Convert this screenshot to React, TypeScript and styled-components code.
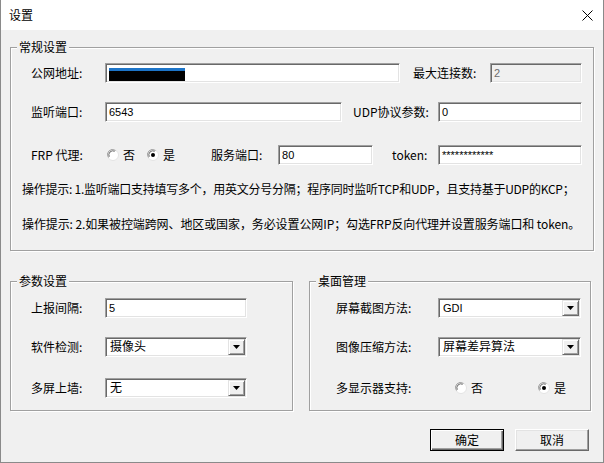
import React from "react";
import styled, { createGlobalStyle } from "styled-components";

const Global = createGlobalStyle`
  html, body { margin: 0; padding: 0; background: #f0f0f0; }
  body {
    font-family: "Noto Sans CJK SC", "Microsoft YaHei", sans-serif;
    font-size: 12px;
    color: #000;
  }
  * { box-sizing: border-box; }
`;

const Window = styled.div`
  width: 604px;
  height: 463px;
  display: flex;
  flex-direction: column;
  border: 1px solid #8a8a8a;
  border-top: none;
  background: #f0f0f0;
  overflow: hidden;
`;

const TitleBar = styled.div`
  height: 30px;
  flex: none;
  background: #fff;
  display: flex;
  align-items: center;
  justify-content: space-between;
  padding: 0 10px 0 8px;
`;

const TitleText = styled.span`
  font-size: 12px;
  line-height: 16px;
`;

const Body = styled.div`
  flex: 1;
  display: flex;
  flex-direction: column;
  padding: 9px 0 0 9px;
`;

const GroupBox = styled.fieldset<{ $w: number }>`
  width: ${(p) => p.$w}px;
  margin: 0;
  padding: 0;
  min-width: 0;
  flex: none;
  border: 1px solid #a0a0a0;
  box-shadow: 1px 1px 0 #fff, inset 1px 1px 0 #fff;
`;

const Legend = styled.legend`
  margin-left: 6px;
  padding: 0 2px;
  line-height: 16px;
  font-size: 12px;
  background: #f0f0f0;
`;

const GroupContent = styled.div<{ $pl: number; $pt: number; $pb: number }>`
  display: flex;
  flex-direction: column;
  padding: ${(p) => p.$pt}px 0 ${(p) => p.$pb}px ${(p) => p.$pl}px;
`;

const Row = styled.div<{ $mt?: number }>`
  display: flex;
  align-items: center;
  height: 20px;
  margin-top: ${(p) => p.$mt ?? 0}px;
`;

const Label = styled.span<{ $w: number; $ml?: number }>`
  flex: none;
  width: ${(p) => p.$w}px;
  margin-left: ${(p) => p.$ml ?? 0}px;
  white-space: nowrap;
  line-height: 16px;
`;

const Tip = styled.div<{ $mt: number; $ls: number }>`
  margin: ${(p) => p.$mt}px 0 0 -9px;
  line-height: 16px;
  white-space: nowrap;
  letter-spacing: ${(p) => p.$ls}px;
`;

const Field = styled.div<{ $w: number; $disabled?: boolean; $cjk?: boolean }>`
  flex: none;
  position: relative;
  width: ${(p) => p.$w}px;
  height: 20px;
  display: flex;
  align-items: center;
  background: ${(p) => (p.$disabled ? "#f0f0f0" : "#fff")};
  color: ${(p) => (p.$disabled ? "#6d6d6d" : "#000")};
  border: 1px solid;
  border-color: #a0a0a0 #fff #fff #a0a0a0;
  box-shadow: inset 1px 1px 0 #696969, inset -1px -1px 0 #e3e3e3;
  padding: 0 0 0 3px;
  font-family: "Liberation Sans", "Noto Sans CJK SC", sans-serif;
  font-size: ${(p) => (p.$cjk ? 12 : 11)}px;
  line-height: 16px;
  white-space: nowrap;
`;

const FieldText = styled.span`
  flex: 1;
  padding-left: 1px;
`;

const Redacted = styled.span`
  display: inline-block;
  width: 76px;
  height: 10px;
  margin-top: 5px;
  background: #000;
  box-shadow: 0 -3px 0 #1c74c8;
`;

const DropButton = styled.div`
  flex: none;
  width: 17px;
  height: 16px;
  margin-right: 1px;
  display: flex;
  align-items: center;
  justify-content: center;
  background: #f0f0f0;
  border: 1px solid;
  border-color: #e3e3e3 #696969 #696969 #e3e3e3;
  box-shadow: inset 1px 1px 0 #fff, inset -1px -1px 0 #a0a0a0;
`;

const RadioItem = styled.span<{ $ml: number }>`
  flex: none;
  display: inline-flex;
  align-items: center;
  gap: 4px;
  margin-left: ${(p) => p.$ml}px;
  line-height: 16px;
`;

const ButtonRow = styled.div`
  display: flex;
  justify-content: flex-end;
  gap: 11px;
  margin: 18px 14px 0 0;
`;

const Button = styled.div<{ $default?: boolean }>`
  width: 74px;
  height: 22px;
  display: flex;
  align-items: center;
  justify-content: center;
  background: #f0f0f0;
  border: 1px solid;
  border-color: ${(p) => (p.$default ? "#000" : "#fff #696969 #696969 #fff")};
  box-shadow: ${(p) =>
    p.$default
      ? "inset 1px 1px 0 #fff, inset -1px -1px 0 #696969, inset -2px -2px 0 #a0a0a0"
      : "inset -1px -1px 0 #a0a0a0, inset 1px 1px 0 #e3e3e3"};
  font-size: 12px;
  line-height: 16px;
`;

const GroupRow = styled.div`
  display: flex;
  gap: 16px;
  margin-top: 22px;
`;

const CloseIcon = () => (
  <svg width="11" height="11" viewBox="0 0 11 11">
    <path d="M0.5 0.5 L10.5 10.5 M10.5 0.5 L0.5 10.5" stroke="#000" strokeWidth="1" fill="none" />
  </svg>
);

const Arrow = () => (
  <svg width="7" height="4" viewBox="0 0 7 4">
    <path d="M0 0 H7 L3.5 4 Z" fill="#000" />
  </svg>
);

const RadioCircle = ({ checked }: { checked?: boolean }) => (
  <svg width="12" height="12" viewBox="0 0 12 12">
    <circle cx="6" cy="6" r="5.5" fill="#fff" stroke="#e3e3e3" />
    <path d="M1.5 8.5 A5 5 0 0 1 8.5 1.5" stroke="#a0a0a0" fill="none" />
    <path d="M2.3 7.7 A4 4 0 0 1 7.7 2.3" stroke="#696969" fill="none" />
    {checked && <circle cx="6" cy="6" r="2" fill="#000" />}
  </svg>
);

const Radio = ({ label, checked, ml }: { label: string; checked?: boolean; ml: number }) => (
  <RadioItem $ml={ml}>
    <RadioCircle checked={checked} />
    <span>{label}</span>
  </RadioItem>
);

const Combo = ({ w, value }: { w: number; value: string }) => (
  <Field $w={w} $cjk={/[\u4e00-\u9fff]/.test(value)}>
    <FieldText>{value}</FieldText>
    <DropButton>
      <Arrow />
    </DropButton>
  </Field>
);

export default function App() {
  return (
    <>
      <Global />
      <Window>
        <TitleBar>
          <TitleText>设置</TitleText>
          <CloseIcon />
        </TitleBar>
        <Body>
          <GroupBox $w={584}>
            <Legend>常规设置</Legend>
            <GroupContent $pl={20} $pt={8} $pb={18}>
              <Row>
                <Label $w={74}>公网地址:</Label>
                <Field $w={295}>
                  <Redacted />
                </Field>
                <Label $w={77} $ml={13}>最大连接数:</Label>
                <Field $w={92} $disabled>2</Field>
              </Row>
              <Row $mt={19}>
                <Label $w={74}>监听端口:</Label>
                <Field $w={237}>6543</Field>
                <Label $w={85} $ml={11}>UDP协议参数:</Label>
                <Field $w={144}>0</Field>
              </Row>
              <Row $mt={23}>
                <Label $w={74}>FRP 代理:</Label>
                <Radio label="否" ml={2} />
                <Radio label="是" ml={12} checked />
                <Label $w={67} $ml={36}>服务端口:</Label>
                <Field $w={95}>80</Field>
                <Label $w={46} $ml={19}>token:</Label>
                <Field $w={144}>************</Field>
              </Row>
              <Tip $mt={16} $ls={-0.25}>
                操作提示: 1.监听端口支持填写多个，用英文分号分隔；程序同时监听TCP和UDP，且支持基于UDP的KCP；
              </Tip>
              <Tip $mt={19} $ls={-0.1}>
                操作提示: 2.如果被控端跨网、地区或国家，务必设置公网IP；勾选FRP反向代理并设置服务端口和 token。
              </Tip>
            </GroupContent>
          </GroupBox>
          <GroupRow>
            <GroupBox $w={283}>
              <Legend>参数设置</Legend>
              <GroupContent $pl={20} $pt={9} $pb={12}>
                <Row>
                  <Label $w={74}>上报间隔:</Label>
                  <Field $w={142}>5</Field>
                </Row>
                <Row $mt={19}>
                  <Label $w={74}>软件检测:</Label>
                  <Combo w={142} value="摄像头" />
                </Row>
                <Row $mt={21}>
                  <Label $w={74}>多屏上墙:</Label>
                  <Combo w={142} value="无" />
                </Row>
              </GroupContent>
            </GroupBox>
            <GroupBox $w={282}>
              <Legend>桌面管理</Legend>
              <GroupContent $pl={26} $pt={9} $pb={12}>
                <Row>
                  <Label $w={102}>屏幕截图方法:</Label>
                  <Combo w={143} value="GDI" />
                </Row>
                <Row $mt={19}>
                  <Label $w={102}>图像压缩方法:</Label>
                  <Combo w={143} value="屏幕差异算法" />
                </Row>
                <Row $mt={21}>
                  <Label $w={102}>多显示器支持:</Label>
                  <Radio label="否" ml={17} />
                  <Radio label="是" ml={55} checked />
                </Row>
              </GroupContent>
            </GroupBox>
          </GroupRow>
          <ButtonRow>
            <Button $default>确定</Button>
            <Button>取消</Button>
          </ButtonRow>
        </Body>
      </Window>
    </>
  );
}
